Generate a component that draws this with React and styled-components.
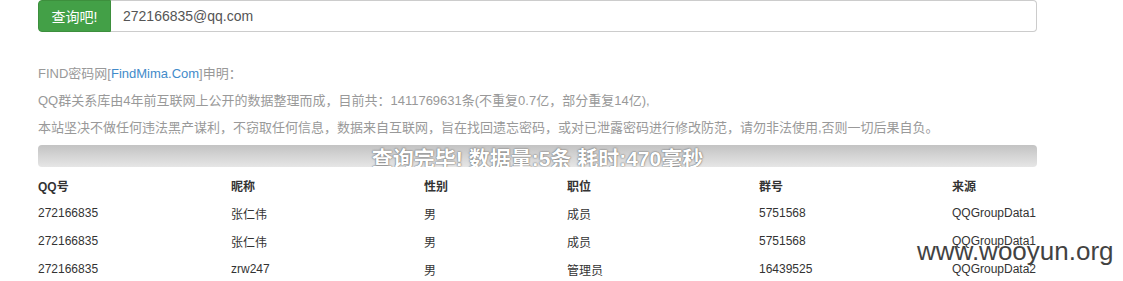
import React from "react";
import styled, { createGlobalStyle } from "styled-components";

const GlobalStyle = createGlobalStyle`
  body {
    margin: 0;
    background: #fff;
    font-family: "Liberation Sans", Arial, "Noto Sans CJK SC", sans-serif;
    color: #333;
  }
`;

const Page = styled.div`
  position: relative;
  width: 1123px;
  height: 281px;
  overflow: hidden;
  padding-left: 38px;
  box-sizing: border-box;
`;

const Content = styled.div`
  width: 999px;
`;

const SearchRow = styled.div`
  display: flex;
  height: 32px;
`;

const SearchButton = styled.button`
  width: 73px;
  height: 32px;
  border: 1px solid #3d8f3d;
  border-radius: 4px 0 0 4px;
  background: #43a047;
  color: #fff;
  font-family: "Liberation Sans", "Noto Sans CJK SC", sans-serif;
  font-size: 14px;
  padding: 0;
`;

const SearchInput = styled.div`
  flex: 1;
  height: 32px;
  box-sizing: border-box;
  border: 1px solid #ccc;
  border-left: none;
  border-radius: 0 4px 4px 0;
  padding-left: 12px;
  font-size: 14px;
  line-height: 30px;
  color: #555;
`;

const Notice = styled.div`
  margin-top: 28px;
  font-size: 13px;
  line-height: 27px;
  color: #999;
  font-family: "Liberation Sans", "Noto Sans CJK SC", sans-serif;
`;

const Link = styled.a`
  color: #428bca;
  text-decoration: none;
`;

const Progress = styled.div`
  margin-top: 4px;
  height: 22px;
  border-radius: 4px;
  background: linear-gradient(#c3c3c3, #e6e6e6);
  overflow: hidden;
  text-align: center;
  color: #fff;
  font-weight: bold;
  font-size: 21px;
  line-height: 27px;
  text-shadow: 0 0 2px #666, 0 0 1px #777;
  font-family: "Liberation Sans", "Noto Sans CJK SC", sans-serif;
`;

const Table = styled.table`
  margin-top: 4px;
  width: 999px;
  border-collapse: collapse;
  table-layout: fixed;
  font-size: 12px;
  font-family: "Liberation Sans", "Noto Sans CJK SC", sans-serif;
`;

const Th = styled.th`
  width: ${(p) => p.w}px;
  height: 28px;
  padding: 0;
  text-align: left;
  font-weight: bold;
  color: #333;
`;

const Td = styled.td`
  height: 28px;
  padding: 0;
  color: #333;
  white-space: nowrap;
`;

const Watermark = styled.div`
  position: absolute;
  left: 917px;
  top: 236px;
  font-size: 26px;
  color: #333;
  font-family: "Liberation Sans", Arial, sans-serif;
  opacity: 0.92;
`;

const columns = [
  { title: "QQ号", w: 193 },
  { title: "昵称", w: 193 },
  { title: "性别", w: 143 },
  { title: "职位", w: 192 },
  { title: "群号", w: 193 },
  { title: "来源", w: 85 },
];

const rows = [
  ["272166835", "张仁伟", "男", "成员", "5751568", "QQGroupData1"],
  ["272166835", "张仁伟", "男", "成员", "5751568", "QQGroupData1"],
  ["272166835", "zrw247", "男", "管理员", "16439525", "QQGroupData2"],
];

export default function App() {
  return (
    <Page>
      <GlobalStyle />
      <Content>
        <SearchRow>
          <SearchButton>查询吧!</SearchButton>
          <SearchInput>272166835@qq.com</SearchInput>
        </SearchRow>
        <Notice>
          <div>
            FIND密码网[<Link href="#">FindMima.Com</Link>]申明：
          </div>
          <div>
            QQ群关系库由4年前互联网上公开的数据整理而成，目前共：1411769631条(不重复0.7亿，部分重复14亿),
          </div>
          <div>
            本站坚决不做任何违法黑产谋利，不窃取任何信息，数据来自互联网，旨在找回遗忘密码，或对已泄露密码进行修改防范，请勿非法使用,否则一切后果自负。
          </div>
        </Notice>
        <Progress>查询完毕! 数据量:5条 耗时:470毫秒</Progress>
        <Table>
          <thead>
            <tr>
              {columns.map((c) => (
                <Th key={c.title} w={c.w}>
                  {c.title}
                </Th>
              ))}
            </tr>
          </thead>
          <tbody>
            {rows.map((r, i) => (
              <tr key={i}>
                {r.map((cell, j) => (
                  <Td key={j}>{cell}</Td>
                ))}
              </tr>
            ))}
          </tbody>
        </Table>
      </Content>
      <Watermark>www.wooyun.org</Watermark>
    </Page>
  );
}
